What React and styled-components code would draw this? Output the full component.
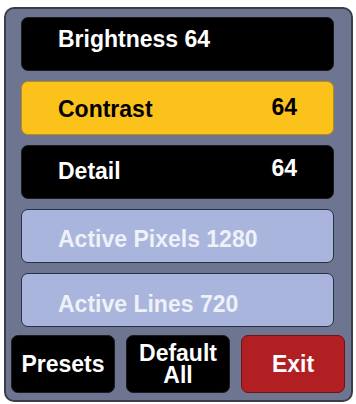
import React from "react";
import styled, { createGlobalStyle } from "styled-components";

const Global = createGlobalStyle`
  html, body { margin: 0; padding: 0; background: #ffffff; }
  body { font-family: "Liberation Sans", Arial, Helvetica, sans-serif; }
`;

const Page = styled.div`
  width: 356px;
  height: 404px;
  padding: 7px 4px 2px 4px;
  box-sizing: border-box;
  display: flex;
`;

const Panel = styled.div`
  flex: 1;
  box-sizing: border-box;
  border: 2px solid #3a3e4b;
  border-radius: 10px;
  background: #6d7591;
  padding: 8px 6px 7px 5px;
  display: flex;
  flex-direction: column;
  gap: 8px;
`;

const Rows = styled.div`
  display: flex;
  flex-direction: column;
  gap: 10px;
  padding: 0 11px 0 10px;
`;

const palette = {
  dark: { bg: "#000000", border: "#1c1d22", color: "#ffffff" },
  active: { bg: "#fbc21c", border: "#b98d10", color: "#000000" },
  light: { bg: "#a9b5dc", border: "#283044", color: "#eef1f8" },
};

const Row = styled.div`
  height: 54px;
  box-sizing: border-box;
  border-radius: 7px;
  border: 1.5px solid ${(p) => palette[p.$kind].border};
  background: ${(p) => palette[p.$kind].bg};
  color: ${(p) => palette[p.$kind].color};
  display: flex;
  align-items: center;
  justify-content: space-between;
  padding: 0 36px 0 36px;
  font-size: 23px;
  font-weight: bold;
`;

const Label = styled.span`
  position: relative;
  top: ${(p) => p.$shift || 0}px;
`;

const Value = styled.span`
  position: relative;
  top: ${(p) => p.$shift || 0}px;
`;

const Buttons = styled.div`
  display: grid;
  grid-template-columns: 104px 104px 104px;
  column-gap: 11px;
  justify-content: space-between;
`;

const Button = styled.div`
  height: 58px;
  box-sizing: border-box;
  border-radius: 7px;
  border: 1.5px solid ${(p) => (p.$red ? "#6e1414" : "#1c1d22")};
  background: ${(p) => (p.$red ? "#b21f22" : "#000000")};
  color: #ffffff;
  display: flex;
  flex-direction: column;
  align-items: center;
  justify-content: center;
  text-align: center;
  font-size: 23px;
  font-weight: bold;
`;

const Line = styled.span`
  display: block;
  line-height: 22px;
`;

export default function App() {
  return (
    <>
      <Global />
      <Page>
        <Panel>
          <Rows>
            <Row $kind="dark">
              <Label $shift={-5}>Brightness 64</Label>
            </Row>
            <Row $kind="active">
              <Label $shift={1}>Contrast</Label>
              <Value $shift={-1}>64</Value>
            </Row>
            <Row $kind="dark">
              <Label $shift={-1}>Detail</Label>
              <Value $shift={-4}>64</Value>
            </Row>
            <Row $kind="light">
              <Label $shift={3}>Active Pixels 1280</Label>
            </Row>
            <Row $kind="light">
              <Label $shift={4}>Active Lines 720</Label>
            </Row>
          </Rows>
          <Buttons>
            <Button>Presets</Button>
            <Button>
              <Line>Default</Line>
              <Line>All</Line>
            </Button>
            <Button $red>Exit</Button>
          </Buttons>
        </Panel>
      </Page>
    </>
  );
}
